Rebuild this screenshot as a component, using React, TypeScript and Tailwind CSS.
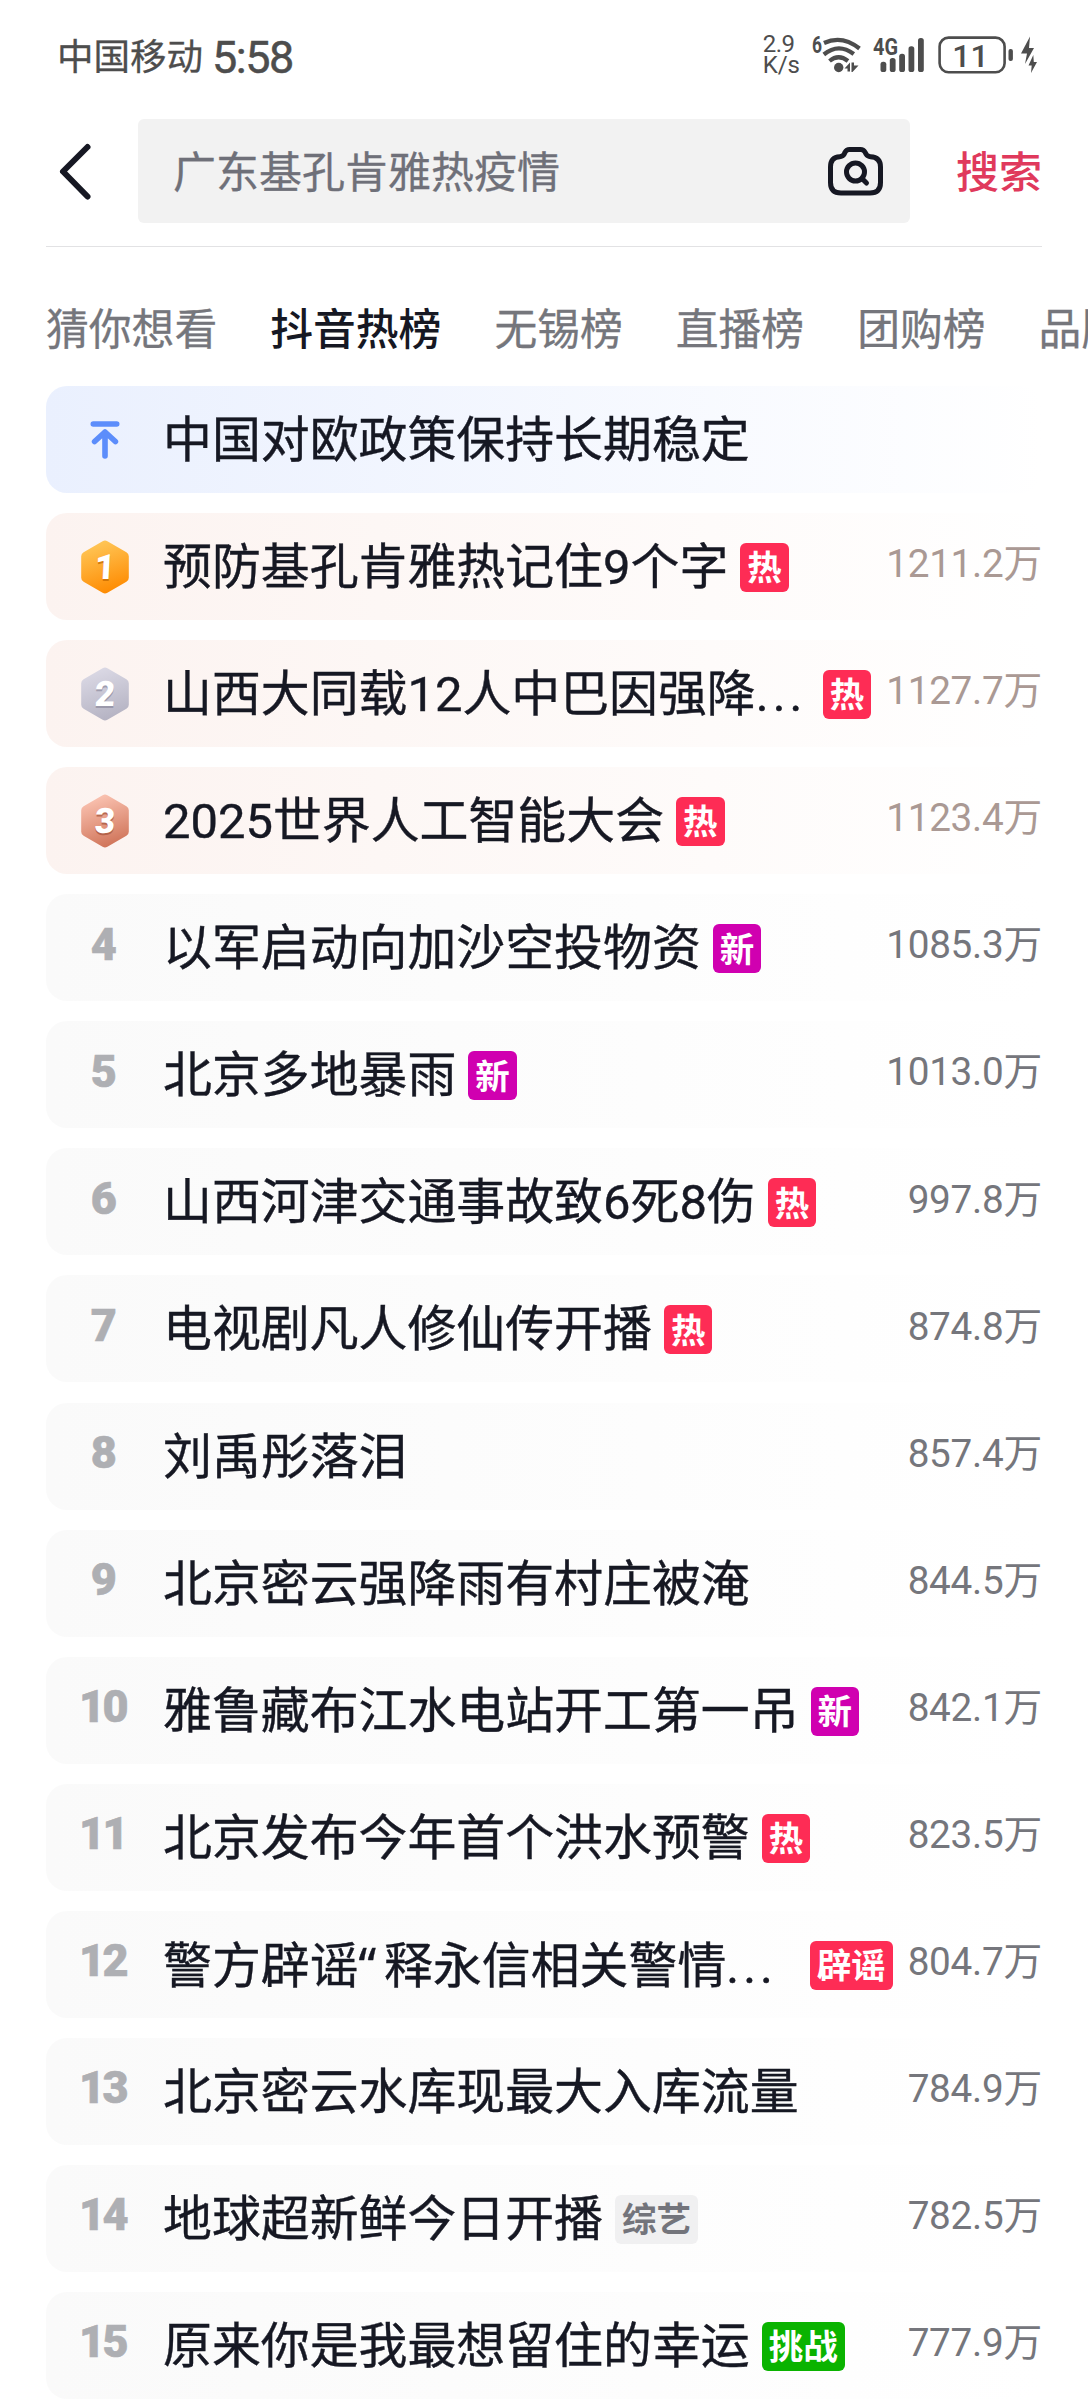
import React from "react";

type Tag = { label: string; color: "red" | "purple" | "grey" | "green" };
type Item = {
  rank: number;
  title: React.ReactNode;
  tag?: Tag;
  heat?: string;
  clipped?: boolean;
};

const HOT: Tag = { label: "热", color: "red" };
const NEW: Tag = { label: "新", color: "purple" };

const Dots = () => <span className="tracking-[4px]">...</span>;
const OpenQuote = () => (
  <span className="inline-block w-[25.5px] font-['Noto_Sans']">“</span>
);

const ITEMS: Item[] = [
  { rank: 0, title: "中国对欧政策保持长期稳定" },
  { rank: 1, title: "预防基孔肯雅热记住9个字", tag: HOT, heat: "1211.2万" },
  { rank: 2, title: <>山西大同载12人中巴因强降<Dots /></>, tag: HOT, heat: "1127.7万", clipped: true },
  { rank: 3, title: "2025世界人工智能大会", tag: HOT, heat: "1123.4万" },
  { rank: 4, title: "以军启动向加沙空投物资", tag: NEW, heat: "1085.3万" },
  { rank: 5, title: "北京多地暴雨", tag: NEW, heat: "1013.0万" },
  { rank: 6, title: "山西河津交通事故致6死8伤", tag: HOT, heat: "997.8万" },
  { rank: 7, title: "电视剧凡人修仙传开播", tag: HOT, heat: "874.8万" },
  { rank: 8, title: "刘禹彤落泪", heat: "857.4万" },
  { rank: 9, title: "北京密云强降雨有村庄被淹", heat: "844.5万" },
  { rank: 10, title: "雅鲁藏布江水电站开工第一吊", tag: NEW, heat: "842.1万" },
  { rank: 11, title: "北京发布今年首个洪水预警", tag: HOT, heat: "823.5万" },
  { rank: 12, title: <>警方辟谣<OpenQuote />释永信相关警情<Dots /></>, tag: { label: "辟谣", color: "red" }, heat: "804.7万", clipped: true },
  { rank: 13, title: "北京密云水库现最大入库流量", heat: "784.9万" },
  { rank: 14, title: "地球超新鲜今日开播", tag: { label: "综艺", color: "grey" }, heat: "782.5万" },
  { rank: 15, title: "原来你是我最想留住的幸运", tag: { label: "挑战", color: "green" }, heat: "777.9万" },
];

const TABS = ["猜你想看", "抖音热榜", "无锡榜", "直播榜", "团购榜", "品牌榜"];

const TAG_COLORS = {
  red: "bg-[#fe2c55] text-white",
  purple: "bg-[#d000b0] text-white",
  grey: "bg-[#f0f0f1] text-[#73747b]",
  green: "bg-[#0ab300] text-white",
};

const MEDALS = [
  { top: "#ffc85a", bottom: "#fe8a00", shadow: "#c56a00" },
  { top: "#dcdae6", bottom: "#b4b2c2", shadow: "#8f8da0" },
  { top: "#fcc5b4", bottom: "#cf7358", shadow: "#a8553d" },
];

function Medal({ rank }: { rank: number }) {
  const m = MEDALS[rank - 1];
  const id = "medal" + rank;
  return (
    <svg width="48" height="54" viewBox="0 0 48 54">
      <defs>
        <linearGradient id={id} x1="0.3" y1="0" x2="0.6" y2="1">
          <stop offset="0" stopColor={m.top} />
          <stop offset="1" stopColor={m.bottom} />
        </linearGradient>
      </defs>
      <path
        d="M21.6 1.2a4.8 4.8 0 0 1 4.8 0L45.4 12.2a4.8 4.8 0 0 1 2.4 4.1v21.400a4.800 4.800 0 0 1-2.400 4.100L26.400 52.800a4.800 4.800 0 0 1-4.800 0L2.600 41.800a4.800 4.800 0 0 1-2.400-4.100V16.300a4.800 4.800 0 0 1 2.400-4.100Z"
        fill={`url(#${id})`}
      />
      <g fontFamily="Roboto, sans-serif" fontWeight="900" fontSize="35" textAnchor="middle" transform="translate(24 0) skewX(-3)">
        <text x="1.500" y="41.500" fill={m.shadow} opacity="0.75">{rank}</text>
        <text x="1.500" y="39.500" fill="#fff">{rank}</text>
      </g>
    </svg>
  );
}

function PinIcon() {
  return (
    <svg width="30" height="38" viewBox="0 0 30 38" fill="none" stroke="#5c8dfb" strokeWidth="5.6" strokeLinecap="round" strokeLinejoin="round">
      <path d="M3.300 3h23.400M15 35V11M4.600 20.500L15 11l10.400 9.500" />
    </svg>
  );
}

function Row({ item }: { item: Item }) {
  const bg =
    item.rank === 0
      ? "from-[#eaf0fe]"
      : item.rank <= 3
      ? "from-[#fcf3f0]"
      : "from-[#fafafa]";
  return (
    <li className={`flex h-[107px] shrink-0 items-center rounded-[21px] bg-linear-to-r to-white ${bg}`}>
      <div className="flex w-[117px] shrink-0 justify-center">
        {item.rank === 0 ? (
          <PinIcon />
        ) : item.rank <= 3 ? (
          <Medal rank={item.rank} />
        ) : (
          <span className="-mt-[7px] mr-[4px] font-[Roboto] text-[45px] leading-none font-black tracking-[-2.500px] text-[#aeafb3] [-webkit-text-stroke:0.600px_#aeafb3]">{item.rank}</span>
        )}
      </div>
      <div className={`flex items-center whitespace-nowrap ${item.clipped ? "flex-1 justify-between" : ""}`}>
        <span className="mt-[4px] text-[48.900px] leading-none text-[#161823] [-webkit-text-stroke:0.400px_#161823]">{item.title}</span>
        {item.tag && (
          <span className={`mt-[2px] ml-[12px] flex h-[49px] items-center rounded-[6px] px-[7px] font-['Noto_Sans_CJK_SC'] text-[34.500px] leading-none font-bold ${TAG_COLORS[item.tag.color]}`}>
            <span className="-mt-[4px]">{item.tag.label}</span>
          </span>
        )}
      </div>
      {item.heat && (
        <span className={`-mt-[4px] text-[38.700px] leading-none tracking-[-0.250px] whitespace-nowrap ${item.clipped ? "ml-[15px]" : "ml-auto"} ${item.rank <= 3 ? "text-[#aa9994]" : "text-[#75767c]"}`}>
          {item.heat}
        </span>
      )}
    </li>
  );
}

function StatusBar() {
  return (
    <div className="flex h-[110px] items-center pr-[51px] pl-[57px] text-[#4d4d4d]">
      <span className="font-['Noto_Sans_CJK_SC'] text-[36.500px] leading-none [-webkit-text-stroke:0.300px_#4d4d4d]">中国移动</span>
      <span className="mt-[4px] ml-[9px] text-[45px] leading-none tracking-[-1.500px] [-webkit-text-stroke:0.500px_#4d4d4d]">5:58</span>
      <div className="ml-auto flex items-center">
        <div className="font-[Roboto] text-[24px] leading-[21px]">
          <div className="tracking-[-0.500px]">2.9</div>
          <div>K/s</div>
        </div>
        <svg className="ml-[11px]" width="226" height="72" viewBox="810 20 226 72" fill="#4d4d4d">
          <text x="811" y="54" fontFamily="Roboto, sans-serif" fontWeight="700" fontSize="23" textLength="10" lengthAdjust="spacingAndGlyphs">6</text>
          <g fill="none" stroke="#4d4d4d" strokeWidth="4.200">
            <path d="M823 44Q841 35.500 858.500 49.500" />
            <path d="M822.800 55.500Q837.500 43.500 852.800 55" />
            <path d="M828.500 62Q837.500 54.500 847 62" />
          </g>
          <circle cx="837.700" cy="68.500" r="4.700" />
          <path d="M843.500 69.500l5.500-6v9h-2.500v-3ZM850.500 63.500h2.500v3h4.500l-6 6.500h-1Z" />
          <text x="872" y="56" fontFamily="Roboto, sans-serif" fontWeight="700" fontSize="23.500" textLength="25" lengthAdjust="spacingAndGlyphs">4G</text>
          <rect x="879.500" y="62.700" width="5.800" height="10.300" rx="2.600" />
          <rect x="888.800" y="59" width="5.800" height="14" rx="2.600" />
          <rect x="898.200" y="54.700" width="5.800" height="18.300" rx="2.600" />
          <rect x="907.500" y="47.300" width="5.800" height="25.700" rx="2.600" />
          <rect x="917" y="39" width="5.800" height="34" rx="2.600" />
          <rect x="938.600" y="38.600" width="65" height="34.600" rx="9" fill="none" stroke="#4d4d4d" strokeWidth="2.600" />
          <text x="969.500" y="67.500" fontFamily="Roboto, sans-serif" fontWeight="500" fontSize="32" textAnchor="middle">11</text>
          <rect x="1007.500" y="50" width="4.400" height="12" rx="2" />
          <path d="M1029 37.500L1020 54.500h6l-2 10.500 9-16h-5ZM1032.300 56l-4.800 10.500h3.200l-.7 7.500 6-11h-3.200Z" />
        </svg>
      </div>
    </div>
  );
}

export default function App() {
  return (
    <div lang="zh-CN" className="flex h-[2400px] w-[1088px] flex-col overflow-hidden bg-white font-[Roboto,'Noto_Sans_CJK_SC',sans-serif]">
      <StatusBar />
      <header className="mx-[46px] flex h-[137px] shrink-0 border-b border-[#e2e2e4] pt-[9px] font-['Noto_Sans_CJK_SC']">
        <svg className="mt-[22px] ml-[10px] shrink-0" width="38" height="62" viewBox="0 0 38 62" fill="none" stroke="#161823" strokeWidth="6" strokeLinecap="round" strokeLinejoin="round">
          <path d="M31.500 6L7 30.500 31.500 55.500" />
        </svg>
        <div className="ml-[44px] flex h-[104px] w-[772px] shrink-0 items-center justify-between rounded-[6px] bg-[#f2f2f2] pr-[26px] pl-[35px]">
          <span className="-mt-[4px] text-[43px] leading-none text-[#6f7079] [-webkit-text-stroke:0.300px_#6f7079]">广东基孔肯雅热疫情</span>
          <svg width="56" height="50" viewBox="0 0 56 50" fill="none" stroke="#161823" strokeWidth="5" strokeLinecap="round" strokeLinejoin="round">
            <path d="M21.500 3.500h11c2 0 3.500.8 4.500 2.600l1.200 2.200c1 1.700 2.300 2.300 4.300 2.400 6.500.3 10 4 10 10.300v15.500c0 7-3.500 10.500-10.500 10.500H13C6 47 2.500 43.500 2.500 36.500V21c0-6.300 3-10 9.300-10.300 2-.1 3.300-.7 4.300-2.400l1-2.200c1-1.800 2.400-2.600 4.400-2.600Z" />
            <circle cx="27.500" cy="26" r="9" />
            <path d="M34 32.500l4.500 4.500" />
          </svg>
        </div>
        <span className="mt-[29px] ml-[46px] text-[43px] leading-none font-medium whitespace-nowrap text-[#e0395c]">搜索</span>
      </header>
      <nav className="flex h-[139px] shrink-0 gap-[53px] pt-[58px] pl-[46px] font-['Noto_Sans_CJK_SC']">
        {TABS.map((tab, i) => (
          <span key={tab} className={`text-[42.800px] leading-none whitespace-nowrap ${i === 1 ? "font-medium text-[#161823]" : "text-[#75767c] [-webkit-text-stroke:0.300px_#75767c]"}`}>
            {tab}
          </span>
        ))}
      </nav>
      <ul className="mx-[46px] flex flex-col gap-[20.070px]">
        {ITEMS.map((item) => (
          <Row key={item.rank} item={item} />
        ))}
      </ul>
    </div>
  );
}
